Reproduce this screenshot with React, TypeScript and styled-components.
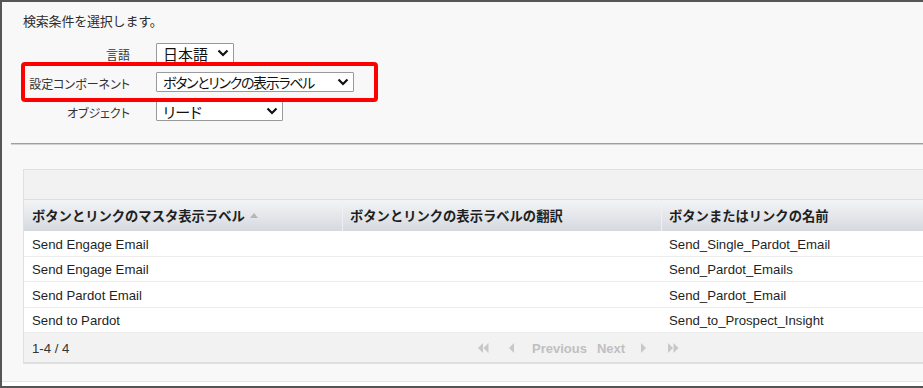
import React from "react";
import styled, { createGlobalStyle } from "styled-components";

const Global = createGlobalStyle`
  html, body { margin: 0; padding: 0; background: #ffffff; }
  * { box-sizing: border-box; }
`;

const JP = `"Noto Sans CJK JP", "Noto Sans", sans-serif`;
const EN = `"Liberation Sans", Arial, "Noto Sans CJK JP", sans-serif`;

const Frame = styled.div`
  position: relative;
  width: 923px;
  height: 388px;
  overflow: hidden;
  background: #f8f8f8;
  border-top: 2px solid #555555;
  border-left: 2px solid #555555;
  border-bottom: 2px solid #555555;
  display: flex;
  flex-direction: column;
`;

const Content = styled.div`
  flex: 1;
  display: flex;
  flex-direction: column;
`;

const Title = styled.div`
  margin: 11px 0 0 21px;
  font-family: ${JP};
  font-size: 13px;
  line-height: 16px;
  letter-spacing: -0.2px;
  color: #2e2e2e;
`;

const Form = styled.div`
  margin-top: 14px;
  display: grid;
  grid-template-columns: 128px auto;
  grid-auto-rows: 20px;
  row-gap: 9px;
  column-gap: 26px;
  align-items: center;
`;

const Label = styled.div`
  justify-self: end;
  font-family: ${JP};
  font-size: 12px;
  font-feature-settings: "palt";
  color: #333333;
  padding-top: 2px;
`;

const Select = styled.div<{ $w: number; $tight?: boolean }>`
  justify-self: start;
  width: ${(p) => p.$w}px;
  height: 20px;
  background: #ffffff;
  border: 1px solid #9a9a9a;
  border-radius: 1px;
  display: flex;
  align-items: center;
  justify-content: space-between;
  padding: 0 4px 0 6px;
  font-family: ${JP};
  font-size: ${(p) => (p.$tight ? 14 : 15)}px;
  letter-spacing: ${(p) => (p.$tight ? -1.3 : 0)}px;
  font-feature-settings: "palt";
  color: #111111;
  white-space: nowrap;
`;

const Highlight = styled.div`
  position: absolute;
  left: 19px;
  top: 60px;
  width: 357px;
  height: 40px;
  border: 4.5px solid #ff0000;
  border-radius: 4px;
  pointer-events: none;
`;

const Divider = styled.div`
  margin: 22px 0 0 9px;
  height: 2px;
  border-top: 1px solid #9e9e9e;
  border-bottom: 1px solid #d2d2d2;
`;

const Panel = styled.div`
  margin: 24px 0 0 21px;
  width: 940px;
  border: 1px solid #e0e0e0;
  border-right: none;
  background: #ffffff;
`;

const Toolbar = styled.div`
  height: 30px;
  background: #f2f2f2;
  border-bottom: 1px solid #dedede;
`;

const Grid = styled.div`
  display: grid;
  grid-template-columns: 318px 319px 1fr;
`;

const HeadCell = styled.div<{ $first?: boolean }>`
  height: 31px;
  display: flex;
  align-items: center;
  padding-left: ${(p) => (p.$first ? 8 : 7)}px;
  background: linear-gradient(#f3f4f6, #d5d9df);
  border-left: ${(p) => (p.$first ? "none" : "1px solid #eef0f3")};
  font-family: ${JP};
  font-size: 13.3px;
  font-weight: 700;
  color: #1e1e1e;
  white-space: nowrap;
`;

const SortArrow = styled.span`
  display: inline-block;
  margin-left: 5px;
  width: 0;
  height: 0;
  border-left: 4.5px solid transparent;
  border-right: 4.5px solid transparent;
  border-bottom: 5px solid #b4b6ba;
`;

const Cell = styled.div`
  height: 25.5px;
  display: flex;
  align-items: center;
  padding-left: 8px;
  padding-top: 2px;
  border-bottom: 1px solid #ececec;
  font-family: ${EN};
  font-size: 13.2px;
  color: #1f1f1f;
  white-space: nowrap;
  background: #ffffff;
`;

const Footer = styled.div`
  height: 30px;
  background: #f2f2f2;
  border-bottom: 1px solid #dedede;
  display: grid;
  grid-template-columns: 454px auto;
  align-items: center;
`;

const Count = styled.div`
  padding-left: 8px;
  padding-top: 1px;
  font-family: ${EN};
  font-size: 13.2px;
  color: #333333;
`;

const Nav = styled.div`
  display: flex;
  align-items: center;
  padding-top: 1px;
`;

const NavItem = styled.span<{ $ml: number }>`
  margin-left: ${(p) => p.$ml}px;
  display: inline-flex;
  align-items: center;
  font-family: ${EN};
  font-size: 13px;
  font-weight: 700;
  color: #c0c0c0;
`;

const BottomStrip = styled.div`
  height: 5px;
  background: #ffffff;
  border-top: 1px solid #e4e4e4;
`;

const Chevron = () => (
  <svg width="12" height="8" viewBox="0 0 12 8">
    <polyline points="1.5,1.5 6,6 10.5,1.5" fill="none" stroke="#111" strokeWidth="2.2" />
  </svg>
);

const Tri = ({ dir, double }: { dir: "l" | "r"; double?: boolean }) => {
  const one = (x: number) =>
    dir === "l"
      ? `${x + 5},0 ${x},5 ${x + 5},10`
      : `${x},0 ${x + 5},5 ${x},10`;
  return (
    <svg width={double ? 11 : 6} height="10" viewBox={`0 0 ${double ? 11 : 6} 10`}>
      <polygon points={one(0)} fill="#c8c8c8" />
      {double && <polygon points={one(5.5)} fill="#c8c8c8" />}
    </svg>
  );
};

const rows = [
  ["Send Engage Email", "", "Send_Single_Pardot_Email"],
  ["Send Engage Email", "", "Send_Pardot_Emails"],
  ["Send Pardot Email", "", "Send_Pardot_Email"],
  ["Send to Pardot", "", "Send_to_Prospect_Insight"],
];

export default function App() {
  return (
    <>
      <Global />
      <Frame>
        <Content>
          <Title>検索条件を選択します。</Title>
          <Form>
            <Label>言語</Label>
            <Select $w={78}>
              <span>日本語</span>
              <Chevron />
            </Select>
            <Label>設定コンポーネント</Label>
            <Select $w={198} $tight>
              <span>ボタンとリンクの表示ラベル</span>
              <Chevron />
            </Select>
            <Label>オブジェクト</Label>
            <Select $w={127}>
              <span>リード</span>
              <Chevron />
            </Select>
          </Form>
          <Divider />
          <Panel>
            <Toolbar />
            <Grid>
              <HeadCell $first>
                ボタンとリンクのマスタ表示ラベル
                <SortArrow />
              </HeadCell>
              <HeadCell>ボタンとリンクの表示ラベルの翻訳</HeadCell>
              <HeadCell>ボタンまたはリンクの名前</HeadCell>
              {rows.map((r, i) =>
                r.map((c, j) => <Cell key={`${i}-${j}`}>{c}</Cell>)
              )}
            </Grid>
            <Footer>
              <Count>1-4 / 4</Count>
              <Nav>
                <NavItem $ml={0}>
                  <Tri dir="l" double />
                </NavItem>
                <NavItem $ml={20}>
                  <Tri dir="l" />
                </NavItem>
                <NavItem $ml={17}>Previous</NavItem>
                <NavItem $ml={10}>Next</NavItem>
                <NavItem $ml={16}>
                  <Tri dir="r" />
                </NavItem>
                <NavItem $ml={21}>
                  <Tri dir="r" double />
                </NavItem>
              </Nav>
            </Footer>
          </Panel>
        </Content>
        <BottomStrip />
        <Highlight />
      </Frame>
    </>
  );
}
